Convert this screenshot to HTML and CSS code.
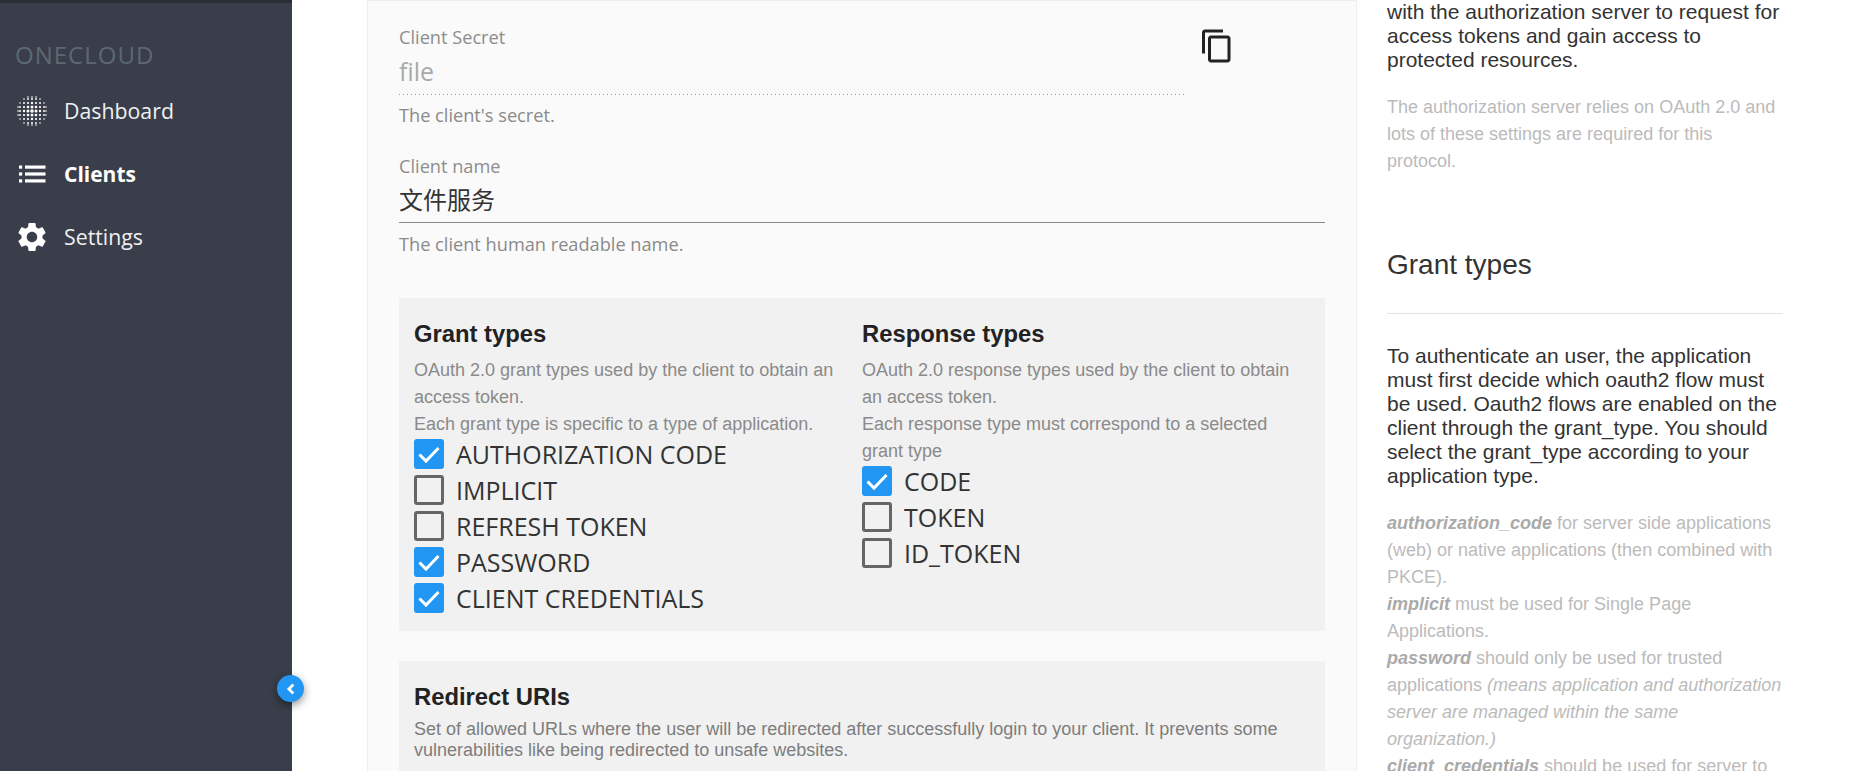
FILE: index.html
```html
<!DOCTYPE html>
<html lang="en">
<head>
<meta charset="utf-8">
<title>OneCloud - Client</title>
<link rel="stylesheet" href="styles.css">
</head>
<body>
<div class="app">
  <aside class="sidebar">
    <div class="brand">ONECLOUD</div>
    <nav class="nav">
      <a class="nav-item">
        <svg class="nav-icon" viewBox="0 0 30 30" fill="#fff">
          <g opacity=".6">
            <circle cx="11" cy="1" r="1"/><circle cx="15" cy="1" r="1"/><circle cx="19" cy="1" r="1"/>
            <circle cx="11" cy="29" r="1"/><circle cx="15" cy="29" r="1"/><circle cx="19" cy="29" r="1"/>
            <circle cx="1" cy="11" r="1"/><circle cx="1" cy="15" r="1"/><circle cx="1" cy="19" r="1"/>
            <circle cx="29" cy="11" r="1"/><circle cx="29" cy="15" r="1"/><circle cx="29" cy="19" r="1"/>
          </g>
          <circle cx="7" cy="3" r=".8"/><circle cx="11" cy="3" r=".9"/><circle cx="15" cy="3" r="1"/><circle cx="19" cy="3" r=".9"/><circle cx="23" cy="3" r=".8"/>
          <circle cx="3" cy="7" r=".8"/><circle cx="7" cy="7" r="1"/><circle cx="11" cy="7" r="1.100"/><circle cx="15" cy="7" r="1.200"/><circle cx="19" cy="7" r="1.100"/><circle cx="23" cy="7" r="1"/><circle cx="27" cy="7" r=".8"/>
          <circle cx="3" cy="11" r=".9"/><circle cx="7" cy="11" r="1.100"/><circle cx="11" cy="11" r="1.300"/><circle cx="15" cy="11" r="1.500"/><circle cx="19" cy="11" r="1.300"/><circle cx="23" cy="11" r="1.100"/><circle cx="27" cy="11" r=".9"/>
          <circle cx="3" cy="15" r="1"/><circle cx="7" cy="15" r="1.200"/><circle cx="11" cy="15" r="1.500"/><circle cx="15" cy="15" r="1.800"/><circle cx="19" cy="15" r="1.500"/><circle cx="23" cy="15" r="1.200"/><circle cx="27" cy="15" r="1"/>
          <circle cx="3" cy="19" r=".9"/><circle cx="7" cy="19" r="1.100"/><circle cx="11" cy="19" r="1.300"/><circle cx="15" cy="19" r="1.500"/><circle cx="19" cy="19" r="1.300"/><circle cx="23" cy="19" r="1.100"/><circle cx="27" cy="19" r=".9"/>
          <circle cx="3" cy="23" r=".8"/><circle cx="7" cy="23" r="1"/><circle cx="11" cy="23" r="1.100"/><circle cx="15" cy="23" r="1.200"/><circle cx="19" cy="23" r="1.100"/><circle cx="23" cy="23" r="1"/><circle cx="27" cy="23" r=".8"/>
          <circle cx="7" cy="27" r=".8"/><circle cx="11" cy="27" r=".9"/><circle cx="15" cy="27" r="1"/><circle cx="19" cy="27" r=".9"/><circle cx="23" cy="27" r=".8"/>
        </svg>
        <span>Dashboard</span>
      </a>
      <a class="nav-item nav-item-active">
        <svg class="nav-icon" viewBox="0 0 30 30" fill="#fff">
          <rect x="2" y="6.500" width="3.200" height="3.200"/><rect x="2" y="13.400" width="3.200" height="3.200"/><rect x="2" y="20.300" width="3.200" height="3.200"/>
          <rect x="8" y="6.500" width="20.500" height="3.200"/><rect x="8" y="13.400" width="20.500" height="3.200"/><rect x="8" y="20.300" width="20.500" height="3.200"/>
        </svg>
        <span>Clients</span>
      </a>
      <a class="nav-item">
        <svg class="nav-icon" viewBox="2.300 1.700 19.400 20.600" fill="#fff">
          <path d="M19.140 12.940c.04-.3.06-.61.06-.94 0-.32-.02-.64-.07-.94l2.030-1.580a.49.49 0 0 0 .12-.61l-1.920-3.320a.488.488 0 0 0-.59-.22l-2.390.96c-.5-.38-1.030-.7-1.620-.94l-.36-2.540a.484.484 0 0 0-.48-.41h-3.840c-.24 0-.43.17-.47.41l-.36 2.540c-.59.24-1.130.57-1.620.94l-2.390-.96c-.22-.08-.47 0-.59.22L2.740 8.870c-.12.21-.08.47.12.61l2.030 1.580c-.05.3-.09.63-.09.94s.02.64.07.94l-2.030 1.580a.49.49 0 0 0-.12.61l1.920 3.320c.12.22.37.29.59.22l2.390-.96c.5.38 1.030.7 1.620.94l.36 2.540c.05.24.24.41.48.41h3.840c.24 0 .44-.17.47-.41l.36-2.540c.59-.24 1.130-.56 1.620-.94l2.390.96c.22.08.47 0 .59-.22l1.920-3.320c.12-.22.07-.47-.12-.61l-2.010-1.580zM12 15.600c-1.980 0-3.600-1.620-3.600-3.600s1.620-3.600 3.600-3.600 3.600 1.620 3.600 3.600-1.620 3.600-3.600 3.600z"/>
        </svg>
        <span>Settings</span>
      </a>
    </nav>
    <button class="collapse" type="button" aria-label="Collapse">
      <svg viewBox="0 0 12 12" width="14" height="14"><path d="M8 2.200 4.200 6 8 9.800" fill="none" stroke="#fff" stroke-width="2.400"/></svg>
    </button>
  </aside>

  <main class="main">
    <section class="form-card">
      <div class="secret-row">
        <div class="field secret-field">
          <div class="field-label">Client Secret</div>
          <div class="field-value field-value-disabled">file</div>
          <div class="field-help">The client's secret.</div>
        </div>
        <svg class="copy-icon" viewBox="0 0 24 24" fill="#222">
          <path d="M16 1H4c-1.100 0-2 .9-2 2v14h2V3h12V1zm3 4H8c-1.100 0-2 .9-2 2v14c0 1.100.9 2 2 2h11c1.100 0 2-.9 2-2V7c0-1.100-.9-2-2-2zm0 16H8V7h11v14z"/>
        </svg>
      </div>
      <div class="field name-field">
        <div class="field-label">Client name</div>
        <div class="field-value field-value-name">文件服务</div>
        <div class="field-help">The client human readable name.</div>
      </div>

      <div class="panel panel-types">
        <div class="type-col type-col-grant">
          <h3 class="panel-title">Grant types</h3>
          <p class="panel-help">OAuth 2.0 grant types used by the client to obtain an access token.<br>Each grant type is specific to a type of application.</p>
          <ul class="check-list">
            <li class="check"><span class="box box-on"><svg viewBox="0 0 30 30"><path d="M5.500 15.500 12 22 24.500 9" fill="none" stroke="#fff" stroke-width="3"/></svg></span>AUTHORIZATION CODE</li>
            <li class="check"><span class="box"></span>IMPLICIT</li>
            <li class="check"><span class="box"></span>REFRESH TOKEN</li>
            <li class="check"><span class="box box-on"><svg viewBox="0 0 30 30"><path d="M5.500 15.500 12 22 24.500 9" fill="none" stroke="#fff" stroke-width="3"/></svg></span>PASSWORD</li>
            <li class="check"><span class="box box-on"><svg viewBox="0 0 30 30"><path d="M5.500 15.500 12 22 24.500 9" fill="none" stroke="#fff" stroke-width="3"/></svg></span>CLIENT CREDENTIALS</li>
          </ul>
        </div>
        <div class="type-col">
          <h3 class="panel-title">Response types</h3>
          <p class="panel-help">OAuth 2.0 response types used by the client to obtain an access token.<br>Each response type must correspond to a selected grant type</p>
          <ul class="check-list">
            <li class="check"><span class="box box-on"><svg viewBox="0 0 30 30"><path d="M5.500 15.500 12 22 24.500 9" fill="none" stroke="#fff" stroke-width="3"/></svg></span>CODE</li>
            <li class="check"><span class="box"></span>TOKEN</li>
            <li class="check"><span class="box"></span>ID_TOKEN</li>
          </ul>
        </div>
      </div>

      <div class="panel panel-redirect">
        <h3 class="panel-title">Redirect URIs</h3>
        <p class="redirect-help">Set of allowed URLs where the user will be redirected after successfully login to your client. It prevents some vulnerabilities like being redirected to unsafe websites.</p>
      </div>
    </section>

    <section class="docs">
      <p class="docs-text">with the authorization server to request for access tokens and gain access to protected resources.</p>
      <p class="docs-muted docs-muted-first">The authorization server relies on OAuth 2.0 and lots of these settings are required for this protocol.</p>
      <h2 class="docs-title">Grant types</h2>
      <p class="docs-text">To authenticate an user, the application must first decide which oauth2 flow must be used. Oauth2 flows are enabled on the client through the grant_type. You should select the grant_type according to your application type.</p>
      <p class="docs-muted docs-muted-list"><b><i>authorization_code</i></b> for server side applications (web) or native applications (then combined with PKCE).<br><b><i>implicit</i></b> must be used for Single Page Applications.<br><b><i>password</i></b> should only be used for trusted applications <i>(means application and authorization server are managed within the same organization.)</i><br><b><i>client_credentials</i></b> should be used for server to</p>
    </section>
  </main>
</div>
</body>
</html>
```

FILE: styles.css
```css
* { box-sizing: border-box; }
html, body { margin: 0; height: 771px; overflow: hidden; background: #fff; }
body { font-family: "Liberation Sans", Arial, sans-serif; color: #222; }

.app { display: flex; height: 771px; }

.sidebar {
  position: relative;
  flex: 0 0 292px;
  background: #393e4a;
  border-top: 3px solid #2b2e37;
  font-family: "Open Sans", sans-serif;
}
.brand {
  margin: 37px 0 0 15px;
  font-size: 24px;
  line-height: 30px;
  letter-spacing: 1px;
  color: #5d6873;
}
.nav { display: flex; flex-direction: column; margin-top: 9px; }
.nav-item {
  display: flex;
  align-items: center;
  gap: 17px;
  height: 63px;
  padding-left: 17px;
  font-size: 21.300px;
  color: #f0f0f2;
}
.nav-item-active { color: #fff; font-weight: 700; font-size: 21px; }
.nav-icon { width: 30px; height: 30px; flex: none; }
.collapse {
  position: absolute;
  left: 277px;
  top: 672px;
  width: 27px;
  height: 27px;
  padding: 0;
  border: 0;
  border-radius: 50%;
  background: #2196f3;
  box-shadow: 0 3px 8px rgba(0, 0, 0, .45);
  display: flex;
  align-items: center;
  justify-content: center;
}

.main { flex: 1; display: flex; padding-left: 75px; min-width: 0; }

.form-card {
  flex: 0 0 990px;
  height: 771px;
  overflow: hidden;
  padding: 26px 31px 0 31px;
  background: #fafafa;
  border-left: 1px solid #eee;
  border-right: 1px solid #eee;
  border-top: 1px solid #eee;
}
.secret-row { display: flex; align-items: flex-start; }
.secret-field { flex: 0 0 788px; }
.copy-icon { width: 36px; height: 36px; margin: 1px 0 0 12px; flex: none; }

.field-label { font-family: "Open Sans", sans-serif; font-size: 18.200px; line-height: 20px; color: #8d8d8d; }
.field-value {
  font-family: "Open Sans", "Noto Sans CJK SC", sans-serif;
  font-size: 25px;
  height: 48px;
  line-height: 48px;
}
.field-value-disabled {
  color: #a9a9a9;
  background: linear-gradient(to right, #999 0 1px, transparent 1px) 0 100% / 4px 1px repeat-x;
}
.field-value-name { font-size: 24px; height: 46px; line-height: 48px; color: #333; border-bottom: 1px solid #8a8a8a; box-sizing: content-box; }
.field-help {
  margin-top: 10px;
  font-family: "Open Sans", sans-serif;
  font-size: 18.200px;
  line-height: 20px;
  color: #8a8a8a;
}
.name-field { margin-top: 31px; }
.name-field .field-help { margin-top: 11px; }

.panel { background: #f1f1f1; padding: 0 15px; }
.panel-types {
  display: flex;
  height: 333px;
  margin-top: 44px;
  padding-top: 21px;
}
.type-col { flex: 1 1 0; min-width: 0; }
.type-col-grant { flex: 0 0 448px; padding-right: 20px; }
.panel-title { margin: 0; font-size: 23.800px; line-height: 30px; font-weight: 700; color: #222; }
.panel-help { margin: 8px 0 0; font-size: 18px; line-height: 27px; color: #8a8a8a; }
.check-list { list-style: none; margin: -2px 0 0; padding: 0; }
.check {
  display: flex;
  align-items: center;
  height: 36px;
  font-family: "Open Sans", sans-serif;
  font-size: 25px;
  color: #333;
}
.box {
  flex: none;
  width: 30px;
  height: 30px;
  margin-right: 12px;
  border: 3px solid #666;
  border-radius: 3px;
}
.box-on { border: 0; background: #2196f3; }
.box-on svg { display: block; width: 30px; height: 30px; }

.panel-redirect { margin-top: 30px; padding-top: 21px; height: 200px; }
.redirect-help { margin: 7px 0 0; font-size: 18px; line-height: 21px; color: #7d7d7d; }

.docs { flex: 0 0 426px; padding: 0 0 0 30px; height: 771px; overflow: hidden; }
.docs-text { margin: 0; font-size: 21px; line-height: 24px; color: #333; }
.docs-muted { margin: 0; font-size: 18px; line-height: 27px; color: #bbb; }
.docs-muted-first { margin-top: 22px; }
.docs-muted-list { margin-top: 22px; }
.docs-muted b { color: #aaa; }
.docs-title {
  margin: 70px 0 30px;
  padding-bottom: 28px;
  font-size: 28px;
  line-height: 40px;
  font-weight: 400;
  color: #333;
  border-bottom: 1px solid #e3e3e3;
}
```
